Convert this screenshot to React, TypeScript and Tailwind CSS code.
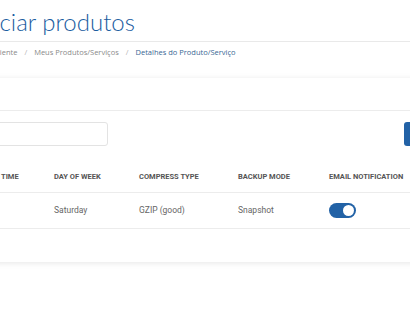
import React from "react";

function Toggle({ on }: { on: boolean }) {
  return (
    <span
      className={`flex h-[15px] w-[27px] items-center rounded-full p-[2px] ${
        on ? "justify-end bg-[#2262a6]" : "justify-start bg-[#d5d5d5]"
      }`}
    >
      <span className="block h-[11px] w-[11px] rounded-full bg-white" />
    </span>
  );
}

function App() {
  const crumbs = ["Área do Cliente", "Meus Produtos/Serviços"];
  const columns = ["Time", "Day of Week", "Compress Type", "Backup Mode", "Email Notification"];
  const backup = {
    time: "",
    day: "Saturday",
    compress: "GZIP (good)",
    mode: "Snapshot",
    email: true,
  };

  return (
    <div className="h-[328px] w-[410px] overflow-hidden bg-white">
      <div className="border-b border-[#e9e9e9] pb-[4px] pt-[8px]">
        <h1 className="ml-[-64px] whitespace-nowrap font-['Lato',sans-serif] text-[24px] font-light leading-[1.2] text-[#1b5d9f]">
          Gerenciar produtos
        </h1>
      </div>

      <nav className="ml-[-36px] flex h-[22px] items-center whitespace-nowrap font-['Open_Sans',sans-serif] text-[7.5px] text-[#8a8a8a]">
        {crumbs.map((c) => (
          <React.Fragment key={c}>
            <span>{c}</span>
            <span className="px-[7px] text-[#b5b5b5]">/</span>
          </React.Fragment>
        ))}
        <span className="text-[#3a6794]">Detalhes do Produto/Serviço</span>
      </nav>

      <section className="ml-[-30px] mt-[14px] w-[510px] bg-white font-['Roboto',sans-serif] shadow-[0_1px_6px_rgba(0,0,0,0.1)]">
        <div className="h-[33px] border-b border-[#ececec]" />

        <div className="flex items-center justify-between pl-[8px] pr-[8px] pt-[11px]">
          <input
            className="h-[24px] w-[130px] rounded-[3px] border border-[#e3e3e3] bg-white px-2 text-[8px] outline-none"
            type="text"
          />
          <button className="h-[24px] w-[68px] rounded-[3px] bg-[#2262a6]" />
        </div>

        <div className="mt-[26px] grid grid-cols-[53px_85px_99px_91px_1fr] border-b border-[#ececec] pb-[11px] pl-[31px] text-[7.5px] font-bold uppercase leading-[9px] text-[#555]">
          {columns.map((c) => (
            <div key={c}>{c}</div>
          ))}
        </div>

        <div className="grid h-[36px] grid-cols-[53px_85px_99px_91px_1fr] items-center border-b border-[#ececec] pl-[31px] text-[8.5px] text-[#666]">
          <div>{backup.time}</div>
          <div>{backup.day}</div>
          <div>{backup.compress}</div>
          <div>{backup.mode}</div>
          <div>
            <Toggle on={backup.email} />
          </div>
        </div>

        <div className="h-[33px]" />
      </section>
    </div>
  );
}

export default App;
